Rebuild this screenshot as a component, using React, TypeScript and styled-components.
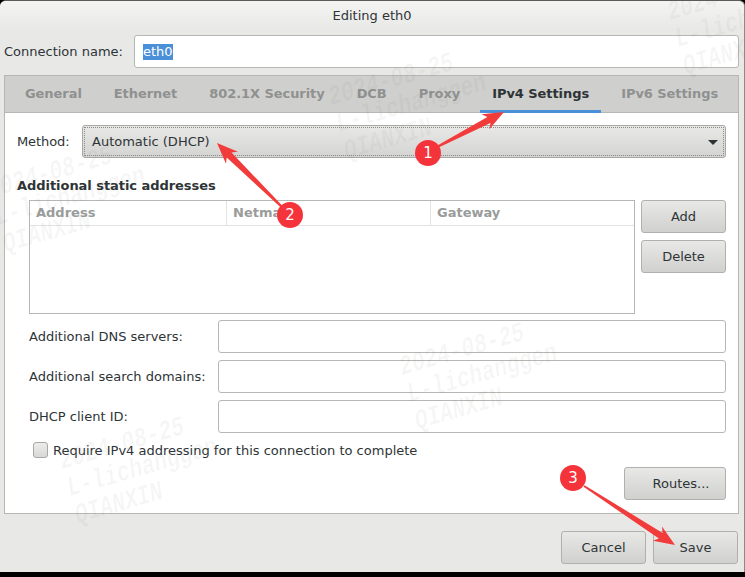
import React from "react";
import styled, { createGlobalStyle } from "styled-components";

const GlobalStyle = createGlobalStyle`
  html, body {
    margin: 0;
    padding: 0;
    background: #000;
  }
  * {
    box-sizing: border-box;
  }
`;

// drawn callouts over the dialog, tail -> tip
const arrows = [
  { x1: 437, y1: 147, x2: 504, y2: 112 },
  { x1: 284, y1: 209, x2: 217, y2: 143 },
  { x1: 584, y1: 486, x2: 675, y2: 545 },
];

const badges = [
  { n: 1, x: 428, y: 153 },
  { n: 2, x: 290, y: 215 },
  { n: 3, x: 573, y: 478 },
];

const watermarks = [
  { x: 331, y: 105 },
  { x: 670, y: 20 },
  { x: -10, y: 198 },
  { x: 402, y: 375 },
  { x: 62, y: 469 },
];

const arrowPoints = (a: { x1: number; y1: number; x2: number; y2: number }) => {
  const dx = a.x2 - a.x1;
  const dy = a.y2 - a.y1;
  const len = Math.sqrt(dx * dx + dy * dy);
  const ux = dx / len;
  const uy = dy / len;
  const at = (back: number, side: number) =>
    `${(a.x2 - ux * back - uy * side).toFixed(1)},${(a.y2 - uy * back + ux * side).toFixed(1)}`;
  return [
    at(len, 1),
    at(17, 3.4),
    at(21, 8.5),
    at(0, 0),
    at(21, -8.5),
    at(17, -3.4),
    at(len, -1),
  ].join(" ");
};

const App = () => {
  return (
    <Screen>
      <GlobalStyle />
      <Window>
        <TitleBar>Editing eth0</TitleBar>
        <NameRow>
          <NameLabel>Connection name:</NameLabel>
          <Field>
            <Selected>eth0</Selected>
          </Field>
        </NameRow>
        <Notebook>
          <TabBar>
            <Tab>General</Tab>
            <Tab>Ethernet</Tab>
            <Tab>802.1X Security</Tab>
            <Tab>DCB</Tab>
            <Tab>Proxy</Tab>
            <Tab $active>IPv4 Settings</Tab>
            <Tab>IPv6 Settings</Tab>
          </TabBar>
          <Panel>
            <MethodRow>
              <MethodLabel>Method:</MethodLabel>
              <Combo>
                Automatic (DHCP)
                <Caret />
              </Combo>
            </MethodRow>
            <Heading>Additional static addresses</Heading>
            <AddressRow>
              <AddressTable>
                <TableHead>
                  <HeadCell $width={197}>Address</HeadCell>
                  <HeadCell $width={204}>Netmask</HeadCell>
                  <HeadCell $width={203}>Gateway</HeadCell>
                </TableHead>
              </AddressTable>
              <ButtonColumn>
                <Button>Add</Button>
                <Button>Delete</Button>
              </ButtonColumn>
            </AddressRow>
            <FormRow>
              <FormLabel>Additional DNS servers:</FormLabel>
              <Field />
            </FormRow>
            <FormRow>
              <FormLabel>Additional search domains:</FormLabel>
              <Field />
            </FormRow>
            <FormRow>
              <FormLabel>DHCP client ID:</FormLabel>
              <Field />
            </FormRow>
            <CheckRow>
              <CheckBox />
              Require IPv4 addressing for this connection to complete
            </CheckRow>
            <RoutesRow>
              <RoutesButton>Routes...</RoutesButton>
            </RoutesRow>
          </Panel>
        </Notebook>
        <Footer>
          <FooterButton>Cancel</FooterButton>
          <FooterButton>Save</FooterButton>
        </Footer>
      </Window>

      {watermarks.map((w, i) => (
        <Watermark key={i} style={{ left: w.x, top: w.y - 17 }}>
          <div>2024-08-25</div>
          <div>L-lichanggen</div>
          <div>QIANXIN</div>
        </Watermark>
      ))}

      <ArrowLayer width={745} height={577} viewBox="0 0 745 577">
        {arrows.map((a, i) => (
          <polygon key={i} points={arrowPoints(a)} fill="#f23c3c" />
        ))}
      </ArrowLayer>
      {badges.map((b) => (
        <Badge key={b.n} style={{ left: b.x - 13, top: b.y - 13 }}>
          {b.n}
        </Badge>
      ))}
    </Screen>
  );
};

const Screen = styled.div`
  position: relative;
  width: 745px;
  height: 577px;
  overflow: hidden;
  background: #000;
  font-family: "DejaVu Sans", sans-serif;
  font-size: 13px;
  color: #2e3436;
`;

const Window = styled.div`
  width: 745px;
  height: 572px;
  display: flex;
  flex-direction: column;
  background: #e8e8e7;
  border-top: 1px solid #5a5a58;
  border-right: 1px solid #8a8a88;
  border-radius: 6px 6px 0 0;
`;

const TitleBar = styled.div`
  height: 29px;
  line-height: 29px;
  text-align: center;
  background: linear-gradient(#f4f4f3, #e8e8e7);
  border-radius: 6px 6px 0 0;
`;

const NameRow = styled.div`
  display: flex;
  align-items: center;
  height: 33px;
  margin: 5px 5px 0 4px;
`;

const NameLabel = styled.span`
  width: 130px;
  flex: none;
`;

const Field = styled.div`
  flex: 1;
  height: 33px;
  display: flex;
  align-items: center;
  padding-left: 8px;
  background: #fff;
  border: 1px solid #b6b6b3;
  border-radius: 3px;
`;

const Selected = styled.span`
  background: #4a90d9;
  color: #fff;
  line-height: 16px;
`;

const Notebook = styled.div`
  width: 735px;
  height: 439px;
  margin: 7px 0 0 4px;
  display: flex;
  flex-direction: column;
  border: 1px solid #b6b6b3;
  background: #fff;
`;

const TabBar = styled.div`
  display: flex;
  gap: 8px;
  height: 37px;
  flex: none;
  padding-left: 8px;
  background: #cfcfcd;
  border-bottom: 1px solid #b6b6b3;
`;

const Tab = styled.div<{ $active?: boolean }>`
  height: 37px;
  line-height: 35px;
  padding: 0 12px;
  font-weight: bold;
  letter-spacing: -0.06px;
  color: ${(p) => (p.$active ? "#2e3436" : "#8f9190")};
  border-bottom: 3px solid ${(p) => (p.$active ? "#4a90d9" : "transparent")};
`;

const Panel = styled.div`
  flex: 1;
  display: flex;
  flex-direction: column;
  padding: 12px 12px 0 12px;
`;

const MethodRow = styled.div`
  display: flex;
  align-items: center;
  height: 33px;
`;

const MethodLabel = styled.span`
  width: 65px;
  flex: none;
  letter-spacing: -0.1px;
`;

const Combo = styled.div`
  position: relative;
  flex: 1;
  height: 33px;
  line-height: 31px;
  padding-left: 9px;
  background: linear-gradient(#e8e8e7, #d4d4d2);
  border: 1px solid #a8a8a5;
  border-radius: 3px;
  outline: 1px dotted #8a8a88;
  outline-offset: -3px;
`;

const Caret = styled.span`
  position: absolute;
  right: 7px;
  top: 14px;
  width: 0;
  height: 0;
  border-left: 5px solid transparent;
  border-right: 5px solid transparent;
  border-top: 5px solid #2e3436;
`;

const Heading = styled.div`
  margin-top: 19px;
  height: 18px;
  line-height: 18px;
  font-weight: bold;
  letter-spacing: -0.05px;
`;

const AddressRow = styled.div`
  display: flex;
  gap: 6px;
  margin: 5px 0 0 12px;
`;

const AddressTable = styled.div`
  width: 606px;
  height: 114px;
  flex: none;
  border: 1px solid #b6b6b3;
`;

const TableHead = styled.div`
  display: flex;
  height: 25px;
  border-bottom: 1px solid #e3e3e1;
`;

const HeadCell = styled.div<{ $width: number }>`
  width: ${(p) => p.$width}px;
  padding-left: 6px;
  line-height: 23px;
  font-weight: bold;
  color: #9a9c9b;
  border-right: 1px solid #e3e3e1;
  &:last-child {
    border-right: none;
  }
`;

const ButtonColumn = styled.div`
  flex: 1;
  display: flex;
  flex-direction: column;
  gap: 7px;
`;

const Button = styled.div`
  height: 33px;
  line-height: 31px;
  text-align: center;
  background: linear-gradient(#e8e8e7, #d0d0ce);
  border: 1px solid #b0b0ad;
  border-radius: 3px;
`;

const FormRow = styled.div`
  display: flex;
  align-items: center;
  margin: 6px 0 1px 12px;
`;

const FormLabel = styled.span`
  width: 189px;
  flex: none;
`;

const CheckRow = styled.div`
  display: flex;
  align-items: center;
  gap: 5px;
  height: 16px;
  margin: 8px 0 0 16px;
`;

const CheckBox = styled.span`
  width: 15px;
  height: 16px;
  flex: none;
  background: linear-gradient(#ececeb, #d8d8d6);
  border: 1px solid #a8a8a5;
  border-radius: 3px;
`;

const RoutesRow = styled.div`
  display: flex;
  justify-content: flex-end;
  margin-top: 9px;
`;

const RoutesButton = styled(Button)`
  width: 102px;
  padding-left: 12px;
`;

const Footer = styled.div`
  display: flex;
  justify-content: flex-end;
  gap: 7px;
  padding: 17px 6px 0 0;
`;

const FooterButton = styled(Button)`
  width: 85px;
`;

const Watermark = styled.div`
  position: absolute;
  transform: rotate(-16deg) scaleY(1.28);
  transform-origin: 0 17px;
  font-family: "Liberation Mono", monospace;
  font-style: italic;
  font-weight: bold;
  font-size: 21.5px;
  line-height: 22px;
  white-space: nowrap;
  color: rgba(110, 110, 110, 0.06);
  pointer-events: none;
`;

const ArrowLayer = styled.svg`
  position: absolute;
  left: 0;
  top: 0;
  pointer-events: none;
`;

const Badge = styled.div`
  position: absolute;
  width: 26px;
  height: 26px;
  line-height: 26px;
  text-align: center;
  border-radius: 50%;
  background: #f5333a;
  color: #fff;
  font-size: 15px;
`;

export default App;
